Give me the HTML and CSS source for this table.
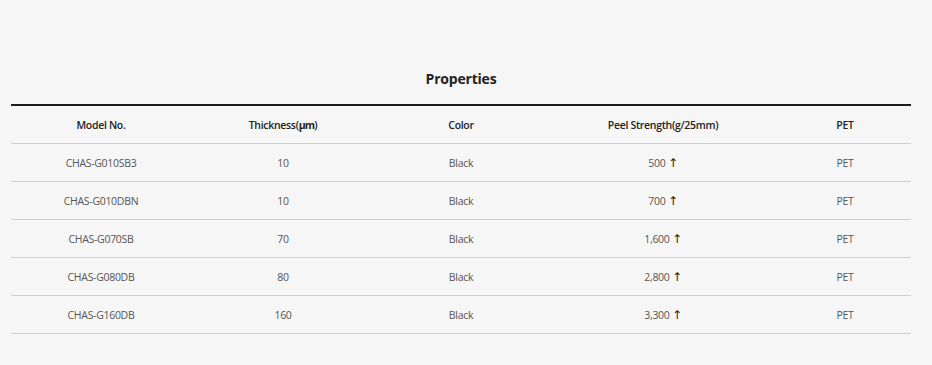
FILE: index.html
```html
<!DOCTYPE html>
<html lang="en">
<head>
    <meta charset="UTF-8">
    <meta name="viewport" content="width=device-width, initial-scale=1.0">
    <title>Properties</title>
    <link rel="stylesheet" href="styles.css">
</head>
<body>

    <!-- Properties Section -->
    <div class="spec-section">
        <h2 class="spec-title">Properties</h2>

        <table class="spec-table">
            <thead>
                <tr>
                    <th class="col-model">Model No.</th>
                    <th class="col-thick">Thickness(<span class="unit">μm</span>)</th>
                    <th class="col-color">Color</th>
                    <th class="col-peel">Peel Strength(g/25mm)</th>
                    <th class="col-base">PET</th>
                </tr>
            </thead>
            <tbody>
                <tr>
                    <td>CHAS-G010SB3</td>
                    <td>10</td>
                    <td>Black</td>
                    <td>500 <span class="arrow">&#8593;</span></td>
                    <td>PET</td>
                </tr>
                <tr>
                    <td>CHAS-G010DBN</td>
                    <td>10</td>
                    <td>Black</td>
                    <td>700 <span class="arrow">&#8593;</span></td>
                    <td>PET</td>
                </tr>
                <tr>
                    <td>CHAS-G070SB</td>
                    <td>70</td>
                    <td>Black</td>
                    <td>1,600 <span class="arrow">&#8593;</span></td>
                    <td>PET</td>
                </tr>
                <tr>
                    <td>CHAS-G080DB</td>
                    <td>80</td>
                    <td>Black</td>
                    <td>2,800 <span class="arrow">&#8593;</span></td>
                    <td>PET</td>
                </tr>
                <tr>
                    <td>CHAS-G160DB</td>
                    <td>160</td>
                    <td>Black</td>
                    <td>3,300 <span class="arrow">&#8593;</span></td>
                    <td>PET</td>
                </tr>
            </tbody>
        </table>
    </div>

</body>
</html>
```

FILE: styles.css
```css
/* General Styling */
body {
    font-family: "Open Sans", "Noto Sans", sans-serif;
    background-color: #f6f6f6;
    margin: 0;
    padding: 0;
    color: #444;
}

/* Section */
.spec-section {
    width: 900px;
    margin-left: 11px;
    padding-top: 68px;
}

.spec-title {
    font-size: 14px;
    font-weight: 700;
    color: #222;
    text-align: center;
    margin: 0 0 14px;
    line-height: 22px;
    letter-spacing: -0.2px;
}

/* Table */
.spec-table {
    width: 100%;
    border-collapse: collapse;
    table-layout: fixed;
    border-top: 2px solid #1c1c1c;
}

.spec-table th,
.spec-table td {
    height: 37px;
    padding: 0;
    text-align: center;
    font-size: 10.5px;
    letter-spacing: -0.3px;
    border-bottom: 1px solid #cfcfcf;
}

.spec-table th {
    font-weight: 600;
    color: #222;
}

.spec-table td {
    font-weight: 400;
    color: #555;
}

.unit {
    font-weight: 700;
    letter-spacing: -0.8px;
}

.col-model { width: 180px; }
.col-thick { width: 184px; }
.col-color { width: 172px; }
.col-peel { width: 232px; }
.col-base { width: 132px; }

.arrow {
    font-family: "DejaVu Sans", sans-serif;
    font-size: 12px;
    color: #222;
}
```
